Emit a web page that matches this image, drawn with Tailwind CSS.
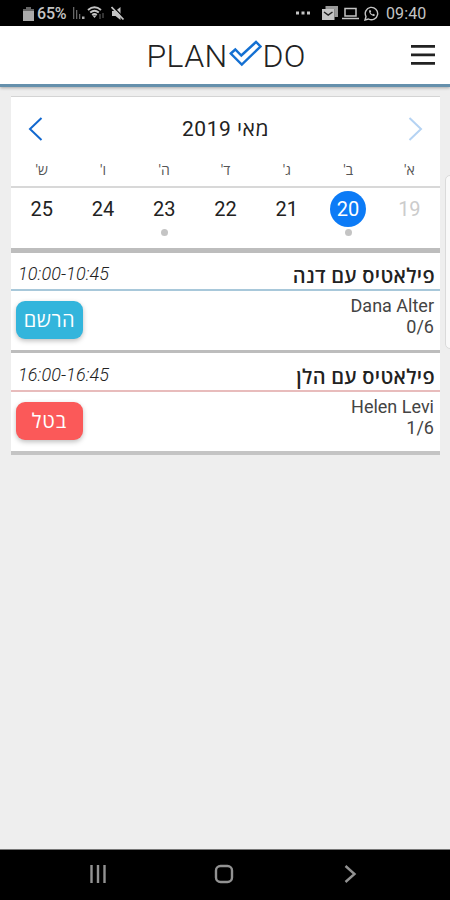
<!DOCTYPE html>
<html lang="he">
<head>
    <meta charset="UTF-8">
    <meta name="viewport" content="width=device-width, initial-scale=1.0">
    <title>PLANDO</title>
    <script src="https://cdn.jsdelivr.net/npm/@tailwindcss/browser@4"></script>
</head>
<body class="bg-[#eeeeee] h-[900px] flex flex-col relative overflow-hidden font-['Roboto','Open_Sans',sans-serif] text-[#222]">
    <!-- Status bar -->
    <div class="bg-black h-[26px] shrink-0 flex items-center justify-between pl-[23px] pr-[23px] text-[#c4c4c4]">
        <div class="flex items-center">
            <svg class="w-[11px] h-[15px]" viewBox="0 0 11 15" fill="currentColor"><path d="M3 1h5v2h3v12H0V3h3z" fill="#666"/><path d="M0 5h11v10H0z" fill="#aaa"/></svg>
            <span class="ml-[3px] w-[31px] text-[16px] leading-[26px] pt-[2px] font-medium tracking-[-0.2px]">65%</span>
            <svg class="ml-[4px] w-[13px] h-[14px]" viewBox="0 0 13 14" fill="#666"><path d="M1 1h1.300v12H1zM4 4h1.300v9H4zM7 8h1.300v5H7z"/><path d="M10 10.500h2.500V13H10z" fill="#aaa"/></svg>
            <svg class="ml-[2px] w-[18px] h-[14px]" viewBox="0 0 18 14" fill="none" stroke="currentColor" stroke-width="1.900"><path d="M1 4Q7.500-1.500 14 4M3.200 6.500Q7.500 3 11.800 6.500M5.200 9Q7.500 7 9.800 9"/><path d="M5.500 9.500h4l-2 2.500z" fill="currentColor" stroke="none"/><path d="M13 8v5M16 7v5" stroke="#444" stroke-width="1.500"/></svg>
            <svg class="ml-[6px] w-[14px] h-[15px]" viewBox="0 0 14 15" fill="currentColor"><path d="M1 5h3.500l5-4v13l-5-4H1z"/><path d="M1.500 0l12 12.500" stroke="#000" stroke-width="1.200"/><path d="M.500 1l12 12.500" stroke="currentColor" stroke-width="1.800"/></svg>
        </div>
        <div class="flex items-center">
            <svg class="w-[16px] h-[4px]" viewBox="0 0 16 4" fill="currentColor"><path d="M1 .5h3v3H1zM6.500.5h3v3h-3zM12 .5h3v3h-3z"/></svg>
            <svg class="ml-[11px] w-[16px] h-[14px]" viewBox="0 0 16 14"><path d="M3.500 0H16v11h-3.500V3h-9z" fill="#999"/><path d="M0 3h12.500v11H0z" fill="#c4c4c4"/><path d="M2 6l4.200 3L10.500 6" fill="none" stroke="#222" stroke-width="1.500"/></svg>
            <svg class="ml-[4px] w-[17px] h-[13px]" viewBox="0 0 17 13" fill="none" stroke="currentColor" stroke-width="1.500"><path d="M3 1.500h11v7.500H3zM0 11.500h17"/></svg>
            <svg class="ml-[5px] w-[15px] h-[15px]" viewBox="0 0 15 15" fill="none" stroke="currentColor" stroke-width="1.400"><path d="M1 14l1-3.500A6.200 6.200 0 1 1 4.500 13z"/><path d="M5 4.500c0 3 2.500 5.500 5.500 5.500l.3-1.600-1.700-.7-.9.800Q7 7.500 6.500 6.500l.7-.9L6.400 4z" fill="currentColor" stroke="none"/></svg>
            <span class="ml-[7px] w-[41px] text-[16px] leading-[26px] pt-[2px] tracking-[0.1px]">09:40</span>
        </div>
    </div>

    <!-- App header -->
    <header class="relative bg-white h-[61px] shrink-0 border-b-[3px] border-[#6590ac] shadow-[0_1px_3px_rgba(0,0,0,0.3)] flex justify-center items-center">
        <div class="flex items-center font-light text-[32px] leading-[40px] text-[#222] ml-[4px] pt-[2px]">
            <span class="w-[82px] tracking-[0.4px]">PLAN</span>
            <svg class="w-[33px] h-[27px] -mt-[6px]" viewBox="0 0 33 27" fill="none" stroke="#1470d2" stroke-width="2.400"><path d="M1.800 13.500L6.300 9.500L12.300 15.500L27 2L31.500 6.500L12.800 24.500Z"/></svg>
            <span class="ml-px w-[45px] tracking-[0.4px]">DO</span>
        </div>
        <svg class="absolute right-[15px] top-[19px] w-[24px] h-[21px]" viewBox="0 0 24 21" fill="#222"><path d="M0 0h24v2.800H0zM0 8.500h24v2.800H0zM0 17h24v2.800H0z"/></svg>
    </header>

    <main class="mx-[11px] w-[429px] mt-[9px]">
        <!-- Week calendar -->
        <section class="bg-white h-[157px] border-t border-t-[#d4d4d4] border-b-[5px] border-b-[#bdbdbd]">
            <div class="flex items-center justify-between h-[64px] px-[17px]">
                <svg class="w-[15px] h-[24px]" viewBox="0 0 15 24" fill="none" stroke="#1268cf" stroke-width="2"><path d="M13.500 1L2 12l11.500 11"/></svg>
                <h1 dir="rtl" class="text-[21px] leading-[28px] tracking-[0.5px]">מאי 2019</h1>
                <svg class="w-[15px] h-[24px]" viewBox="0 0 15 24" fill="none" stroke="#b5d3f3" stroke-width="2"><path d="M1.500 1L13 12L1.500 23"/></svg>
            </div>
            <div dir="rtl" class="grid grid-cols-7 h-[27px] border-b-2 border-[#d8d8d8] text-center text-[14px] leading-[18px] text-[#555]">
                <span>א'</span><span>ב'</span><span>ג'</span><span>ד'</span><span>ה'</span><span>ו'</span><span>ש'</span>
            </div>
            <div dir="rtl" class="grid grid-cols-7 justify-items-center pt-[3px] text-[20px] leading-[37px]">
                <span class="text-[#ccc]">19</span>
                <div class="flex flex-col items-center">
                    <span class="w-[36px] h-[36px] rounded-full bg-[#0c7bf6] text-white text-center">20</span>
                    <i class="mt-[2px] w-[7px] h-[7px] rounded-full bg-[#c4c4c4]"></i>
                </div>
                <span>21</span>
                <span>22</span>
                <div class="flex flex-col items-center">
                    <span class="h-[36px]">23</span>
                    <i class="mt-[2px] w-[7px] h-[7px] rounded-full bg-[#c4c4c4]"></i>
                </div>
                <span>24</span>
                <span>25</span>
            </div>
        </section>

        <!-- Lessons -->
        <article class="bg-white h-[100px] border-b-[3px] border-[#bdbdbd]">
            <div class="flex justify-between h-[38px] border-b-2 border-[#a8c8da] pl-[7px] pr-[5px]">
                <span class="italic font-light text-[18px] leading-[42px] tracking-[0.1px]">10:00-10:45</span>
                <h2 dir="rtl" class="font-semibold text-[20px] leading-[47px] tracking-[0.35px]">פילאטיס עם דנה</h2>
            </div>
            <div class="flex justify-between pl-[5px] pr-[6px]">
                <button class="mt-[10px] w-[67px] h-[38px] rounded-[9px] bg-[#33b5dc] text-white text-[20px] tracking-[0.6px] shadow-[0_2px_5px_rgba(0,0,0,0.25)]">הרשם</button>
                <div class="pt-[4px] text-right text-[18px] leading-[21px] text-[#444]">
                    <p>Dana Alter</p>
                    <p>0/6</p>
                </div>
            </div>
        </article>
        <article class="bg-white h-[102px] border-b-[4px] border-[#c4c4c4]">
            <div class="flex justify-between h-[39px] border-b-2 border-[#e8bcbc] pl-[7px] pr-[5px]">
                <span class="italic font-light text-[18px] leading-[44px] tracking-[0.1px]">16:00-16:45</span>
                <h2 dir="rtl" class="font-semibold text-[20px] leading-[49px] tracking-[0.35px]">פילאטיס עם הלן</h2>
            </div>
            <div class="flex justify-between pl-[5px] pr-[6px]">
                <button class="mt-[10px] w-[67px] h-[38px] rounded-[9px] bg-[#fb5959] text-white text-[20px] tracking-[1px] shadow-[0_2px_5px_rgba(0,0,0,0.25)]">בטל</button>
                <div class="pt-[4px] text-right text-[18px] leading-[21px] text-[#444]">
                    <p>Helen Levi</p>
                    <p>1/6</p>
                </div>
            </div>
        </article>
    </main>

    <!-- Edge panel handle -->
    <div class="absolute right-[-4px] top-[175px] w-[9px] h-[174px] rounded-l-[5px] bg-[#f9f9f9] border border-[#dadada]"></div>

    <!-- Navigation bar -->
    <nav class="mt-auto h-[51px] shrink-0 border-t border-[#777] bg-black">
        <svg class="w-[450px] h-[50px]" viewBox="0 0 450 50" fill="none" stroke="#929292" stroke-width="2.400">
            <path d="M91.500 15v18M98 15v18M104.500 15v18"/>
            <rect x="216" y="16" width="16" height="16" rx="4.500"/>
            <path d="M345.500 16l9 8-9 8"/>
        </svg>
    </nav>
</body>
</html>
